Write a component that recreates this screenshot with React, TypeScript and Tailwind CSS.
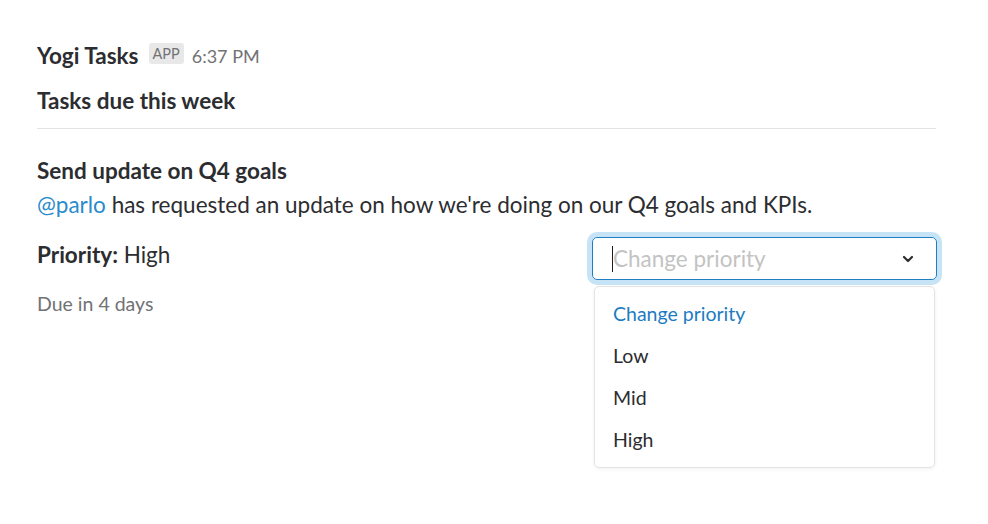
import React from "react";

export default function App() {
  const font = { fontFamily: "Lato, 'Noto Sans', sans-serif" };
  return (
    <div className="w-[988px] h-[524px] bg-white text-[#2c2d30] relative" style={font}>
      <div className="pl-[37px] pt-[42px] w-[937px]">
        <div className="flex items-center h-[28px]">
          <span className="text-[22.5px] font-bold leading-[28px] text-[#2c2d30]">Yogi Tasks</span>
          <span className="ml-[10px] px-[4px] h-[21px] leading-[21px] rounded-[3px] bg-[#e8e8e8] text-[#717274] text-[14.5px] -mt-[5px]">APP</span>
          <span className="ml-[8px] text-[18px] text-[#717274] leading-[28px]">6:37 PM</span>
        </div>
        <div className="mt-[17px] text-[22.5px] font-bold leading-[28px]">Tasks due this week</div>
        <div className="mt-[13px] h-px bg-[#e3e3e3] w-[899px]"></div>
        <div className="mt-[28px] text-[22.5px] font-bold leading-[28px]">Send update on Q4 goals</div>
        <div className="mt-[6px] text-[22.5px] leading-[28px]">
          <span className="text-[#2a8bcc]">@parlo</span> has requested an update on how we're doing on our Q4 goals and KPIs.
        </div>
        <div className="mt-[16px] flex justify-between items-start">
          <div className="mt-[6px] text-[22.5px] leading-[28px]">
            <span className="font-bold">Priority:</span> High
          </div>
          <div className="relative mt-[2px]">
            <div className="w-[345px] h-[43px] rounded-[5px] border border-[#1e7fc2] ring-[5px] ring-[#c6e4f6] flex items-center pl-[19px] pr-[22px]">
              <span className="w-px h-[26px] bg-[#1d1c1d]"></span>
              <span className="flex-1 text-[22.5px] text-[#c3c3c3] leading-[28px]">Change priority</span>
              <svg width="12" height="8" viewBox="0 0 12 8" className="text-[#2c2d30]">
                <path d="M2 2 L6 6 L10 2" fill="none" stroke="currentColor" strokeWidth="2.2" strokeLinecap="round" strokeLinejoin="round" />
              </svg>
            </div>
            <div className="absolute left-[2px] top-[49px] w-[341px] rounded-[5px] border border-[#e3e3e3] bg-white shadow-[0_1px_4px_rgba(0,0,0,0.06)] pt-[6px] pb-[6px]">
              <div className="h-[42px] flex items-center pl-[18px] text-[19.5px] text-[#1d7cc1]">Change priority</div>
              <div className="h-[42px] flex items-center pl-[18px] text-[19.5px]">Low</div>
              <div className="h-[42px] flex items-center pl-[18px] text-[19.5px]">Mid</div>
              <div className="h-[42px] flex items-center pl-[18px] text-[19.5px]">High</div>
            </div>
          </div>
        </div>
        <div className="mt-[12px] text-[19.5px] text-[#717274] leading-[24px]">Due in 4 days</div>
      </div>
    </div>
  );
}
